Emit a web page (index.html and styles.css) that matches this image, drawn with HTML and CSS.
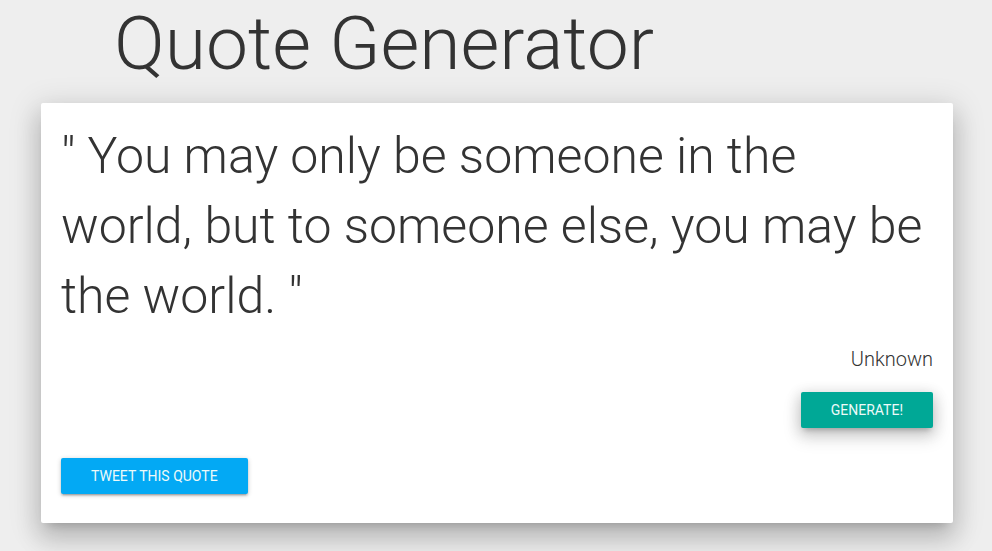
FILE: index.html
```html
<!DOCTYPE html>
<html lang="en">
<head>
<meta charset="utf-8">
<title>Quote Generator</title>
<link rel="stylesheet" href="styles.css">
</head>
<body>
  <h1 class="title">Quote Generator</h1>
  <div class="card">
    <p class="quote">" You may only be someone in the world, but to someone else, you may be the world. "</p>
    <p class="author">Unknown</p>
    <div class="actions-right">
      <button class="btn btn-generate">Generate!</button>
    </div>
    <div class="actions-left">
      <button class="btn btn-tweet">Tweet this quote</button>
    </div>
  </div>
</body>
</html>
```
FILE: styles.css
```css
html, body {
  margin: 0;
  padding: 0;
  background: #eeeeee;
  font-family: Roboto, "Liberation Sans", sans-serif;
  color: #333333;
}

body {
  padding-bottom: 40px;
}

.title {
  margin: 6px 0 0 114px;
  font-size: 75px;
  line-height: 74px;
  font-weight: 300;
  color: #333333;
}

.card {
  margin: 23px 0 0 41px;
  width: 912px;
  box-sizing: border-box;
  background: #ffffff;
  padding: 18px 20px 29px 20px;
  border-radius: 2px;
  box-shadow: 0 16px 24px 2px rgba(0,0,0,0.14), 0 6px 30px 5px rgba(0,0,0,0.12), 0 8px 10px -7px rgba(0,0,0,0.2);
}

.quote {
  margin: 0;
  font-size: 50px;
  line-height: 70px;
  font-weight: 300;
  color: #333333;
}

.author {
  margin: 13px 0 0 0;
  text-align: right;
  font-size: 20px;
  line-height: 30px;
  font-weight: 300;
  color: #333333;
}

.actions-right {
  display: flex;
  justify-content: flex-end;
  margin-top: 18px;
}

.actions-left {
  display: flex;
  justify-content: flex-start;
  margin-top: 30px;
}

.btn {
  border: none;
  border-radius: 2px;
  height: 36px;
  line-height: 36px;
  padding: 0 30px;
  font-family: Roboto, "Liberation Sans", sans-serif;
  font-size: 14px;
  font-weight: 400;
  text-transform: uppercase;
  color: #eefaf9;
  cursor: pointer;
}

.btn-generate {
  background: #00a896;
  box-shadow: 0 8px 17px 2px rgba(0,0,0,0.14), 0 3px 14px 2px rgba(0,0,0,0.12), 0 5px 5px -3px rgba(0,0,0,0.2);
}

.btn-tweet {
  background: #03a9f4;
  box-shadow: 0 2px 2px 0 rgba(0,0,0,0.14), 0 3px 1px -2px rgba(0,0,0,0.12), 0 1px 5px 0 rgba(0,0,0,0.2);
}
```
